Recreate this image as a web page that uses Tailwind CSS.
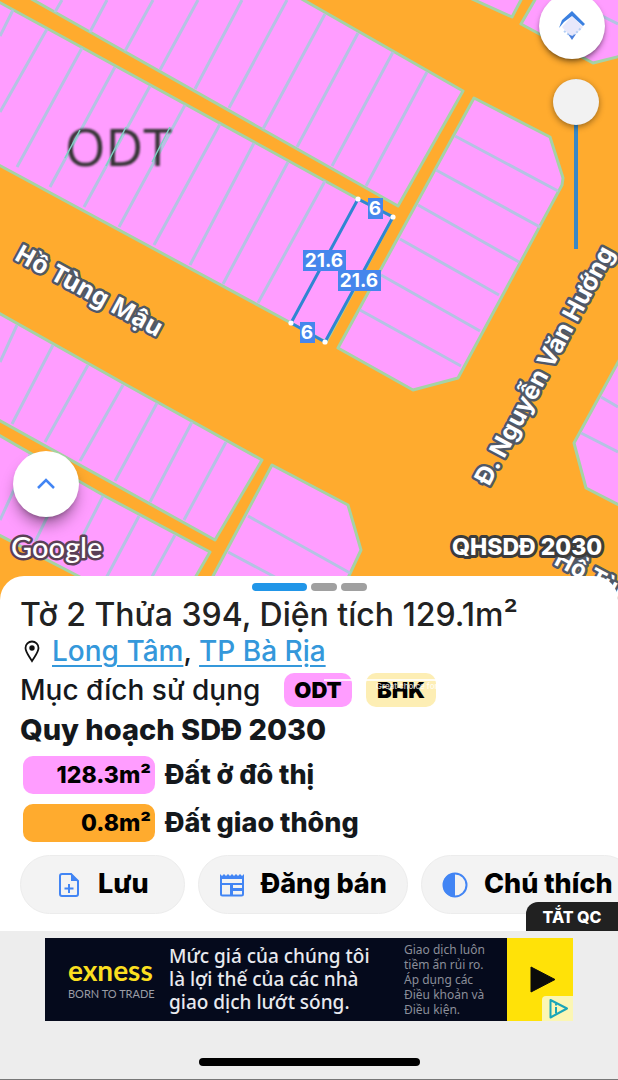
<!DOCTYPE html>
<html lang="vi">
<head>
  <meta charset="UTF-8">
  <meta name="viewport" content="width=device-width, initial-scale=1">
  <title>Tờ 2 Thửa 394</title>
  <script src="https://cdn.jsdelivr.net/npm/@tailwindcss/browser@4"></script>
</head>
<body class="flex flex-col min-h-screen overflow-x-hidden bg-[#ededed] text-[#14181c] font-['Inter','Noto_Sans',sans-serif]">

  <!-- Map -->
  <main class="relative flex-1 min-h-[480px] bg-[#ffab2e] overflow-hidden">
    <svg class="absolute inset-0 w-full h-full" viewBox="0 0 618 603" preserveAspectRatio="xMidYMin slice" role="img" aria-label="Bản đồ quy hoạch">
      <!-- blocks -->
      <g fill="#ff9dff" stroke="#a5d3a5" stroke-width="3" stroke-linejoin="round">
        <path d="M28 -3L90 32L398 206L463 91L300 -2Z"/>
        <path d="M-3 1L83 48L358 199L393 217L326 342L291 323L-3 164Z"/>
        <path d="M474 98L550 137L563 178L562 185L458 378L413 390L338 348Z"/>
        <path d="M470 -2L512 17L522 -2Z"/>
        <path d="M536 -2L521 24L593 63L621 56V-3Z"/>
        <path d="M-3 312L123 383L262 460L215 540L-3 419Z"/>
        <path d="M-3 434L103 495L210 552L188 590H105L-3 534Z"/>
        <path d="M272 465L348 505L361 550L340 595H203Z"/>
        <path d="M621 357L574 443L586 488L621 506Z"/>
      </g>
      <!-- plot lines -->
      <g fill="none" stroke="#b4c3e3" stroke-width="3">
        <path d="M62 0L55 12M107 0L90 32M153 0L125 51M198 0L160 70M242 0L195 89M287 0L229 108M325 14L263 129M358 33L297 147M393 52L332 166M427 72L366 186"/>
        <path d="M13 10L0 36M47 29L0 112M82 48L17 167M115 67L50 187M150 86L84 207M185 105L119 227M220 124L154 245M254 143L190 265M288 162L223 284M325 181L258 303"/>
        <path d="M455 136L558 191M436 170L540 227M418 205L519 262M400 239L499 295M381 275L480 331M360 310L461 366"/>
        <path d="M600 15L618 24M601 397L618 407M581 433L618 452"/>
        <path d="M17 325L0 362M53 345L12 424M88 365L45 442M123 385L80 461M157 403L115 481M192 422L150 502M226 442L184 520"/>
        <path d="M30 455L0 520M67 476L35 542M103 496L68 565M139 516L104 582M175 535L148 584M248 516L350 573M228 552L273 576L290 586"/>
      </g>
      <text x="65" y="166" font-size="52" font-weight="500" fill="#333" class="font-['Open_Sans'] blur-[1px]">ODT</text>
      <path d="M80 130L65 158M126 127L106 166M170 127L152 162" stroke="#7fd0c4" stroke-width="1.5"/>

      <!-- selected plot -->
      <path d="M358 199L393 217L325 342L291 323Z" fill="none" stroke="#2f86d2" stroke-width="3"/>
      <g fill="#fff"><circle cx="358" cy="199" r="2.6"/><circle cx="393" cy="217" r="2.6"/><circle cx="325" cy="342" r="2.6"/><circle cx="291" cy="323" r="2.6"/></g>
      <g fill="#4686ec"><path d="M368 198h15v21h-15zM303 250h43v21h-43zM338 270h43v21h-43zM300 322h15v21h-15z"/></g>
      <g fill="#fff" font-size="19" font-weight="700" text-anchor="middle">
        <text x="375" y="215">6</text>
        <text x="324" y="267">21.6</text>
        <text x="359" y="287">21.6</text>
        <text x="307" y="339">6</text>
      </g>

      <!-- road names -->
      <g fill="#fff" stroke="#505866" stroke-width="5" stroke-linejoin="round" paint-order="stroke" font-weight="700">
        <text transform="translate(13 259) rotate(28.5)" font-size="25" class="font-['Noto_Sans']">Hồ Tùng Mậu</text>
        <text transform="translate(489 487) rotate(-61.8)" font-size="25">Đ. Nguyễn Văn Hướng</text>
        <text transform="translate(553 564) rotate(28)" font-size="24">Hồ Tùng Mậu</text>
      </g>
      <text x="452" y="555" font-size="23" font-weight="800" fill="#fff" stroke="#3c3c3c" stroke-width="6" stroke-linejoin="round" paint-order="stroke">QHSDĐ 2030</text>
      <text x="11" y="558" font-size="29" font-weight="500" fill="#fff" stroke="#5a4056" stroke-width="5" stroke-linejoin="round" paint-order="stroke" class="font-['Lato']">Google</text>
    </svg>

    <button type="button" aria-label="Lớp bản đồ" class="absolute -top-[7px] right-[13px] size-[66px] rounded-full bg-white shadow-md shadow-black/40 grid place-items-center">
      <svg class="size-8" viewBox="0 0 32 32" fill="none">
        <path d="M16 6L27 17L16 28L6 17Z" fill="#e8e8fb"/>
        <path d="M3 18L6 10L16 1L29 14L27 16L16 6L8 12Z" fill="#3b80e0"/>
        <path d="M8 21L16 27L25 18" stroke="#b4cff5" stroke-width="2" stroke-dasharray="2 2"/>
        <path d="M12 24L16 26L20 24L16 30Z" fill="#4a7fdc"/>
      </svg>
    </button>
    <input type="range" min="0" max="100" value="0" aria-label="Độ trong suốt" class="absolute top-[79px] right-[19px] w-[46px] h-[170px] appearance-none [writing-mode:vertical-lr] bg-[linear-gradient(#3a88c4,#3a88c4)] bg-[length:4px_100%] bg-center bg-no-repeat [&::-webkit-slider-thumb]:appearance-none [&::-webkit-slider-thumb]:size-[46px] [&::-webkit-slider-thumb]:rounded-full [&::-webkit-slider-thumb]:bg-[#f2f2f2] [&::-webkit-slider-thumb]:shadow-[0_2px_6px_rgba(0,0,0,0.4)]">
    <button type="button" aria-label="Mở rộng" class="absolute top-[451px] left-[13px] size-[66px] rounded-full bg-white shadow-lg shadow-black/40 grid place-items-center">
      <svg class="size-6" viewBox="0 0 24 24" fill="none" stroke="#4285f4" stroke-width="2.500"><path d="M4 16L12 8L20 16"/></svg>
    </button>
  </main>

  <!-- Plot details -->
  <section class="relative -mt-6 rounded-t-3xl bg-white pt-[7px] pb-[17px]">
    <div class="flex justify-center gap-1">
      <span class="w-[55px] h-2 rounded-full bg-[#2196e8]"></span>
      <span class="w-[26px] h-2 rounded-full bg-[#a0a0a0]"></span>
      <span class="w-[26px] h-2 rounded-full bg-[#a0a0a0]"></span>
    </div>

    <div class="px-5">
      <h1 class="mt-1 text-[32px] leading-10 font-medium whitespace-nowrap text-[#222]">Tờ 2 Thửa 394, Diện tích 129.1m²</h1>
      <p class="flex items-center text-[28px] leading-8 font-medium whitespace-nowrap">
        <svg class="w-6 h-6 mr-2" viewBox="0 0 24 24" fill="none" stroke="#111" stroke-width="1.800"><path d="M12 22C9 17 5.500 13 5.500 9a6.500 6.500 0 0 1 13 0C18.500 13 15 17 12 22Z"/><circle cx="12" cy="9" r="1.800" fill="#111"/></svg>
        <span><a href="#" class="text-[#3498db] underline underline-offset-4 decoration-2">Long Tâm</a>, <a href="#" class="text-[#3498db] underline underline-offset-4 decoration-2">TP Bà Rịa</a></span>
      </p>
      <div class="relative flex items-center gap-3.5 h-[45px] text-[28px] font-medium whitespace-nowrap">
        <span class="w-[250px]">Mục đích sử dụng</span>
        <span class="w-[68px] h-[34px] rounded-[10px] bg-[#ff9dff] text-black text-center text-[22px] leading-[34px] font-black">ODT</span>
        <span class="w-[70px] h-[34px] rounded-[10px] bg-[#fdeeb4] text-black text-center text-[22px] leading-[34px] font-black">BHK</span>
        <span class="absolute left-[304px] top-3 w-28 pl-[52px] border-t-2 border-white/80 text-[8px] leading-[10px] text-white/80">Great choice for you</span>
      </div>
      <h2 class="text-[29px] leading-9 font-extrabold">Quy hoạch SDĐ 2030</h2>
      <ul class="mt-2 ml-[3px] space-y-2.5 text-[27px] leading-[38px] font-extrabold">
        <li class="flex items-center gap-2.5"><span class="w-[132px] h-[38px] pr-1 rounded-[10px] bg-[#ff9dff] text-black text-right text-[23px]">128.3m²</span>Đất ở đô thị</li>
        <li class="flex items-center gap-2.5"><span class="w-[132px] h-[38px] pr-1 rounded-[10px] bg-[#ffab2e] text-black text-right text-[23px]">0.8m²</span>Đất giao thông</li>
      </ul>
    </div>

    <div class="mt-[13px] pl-5 flex gap-[13px] overflow-hidden text-[27px] font-extrabold text-black whitespace-nowrap">
      <button type="button" class="flex shrink-0 items-center gap-4 h-[59px] px-[35px] rounded-full bg-[#f3f3f3] border border-[#ececec]">
        <svg class="size-[26px]" viewBox="0 0 26 26" fill="none" stroke="#4285f4" stroke-width="2"><path d="M15 2H6a2 2 0 0 0-2 2V22a2 2 0 0 0 2 2H20a2 2 0 0 0 2-2V9Z"/><path d="M15 1V9H22Z" fill="#4285f4" stroke="none"/><path d="M13 12V21M8.500 16.500H17.500"/></svg>
        Lưu
      </button>
      <button type="button" class="flex shrink-0 items-center gap-4 h-[59px] px-5 rounded-full bg-[#f3f3f3] border border-[#ececec]">
        <svg class="size-[26px]" viewBox="0 0 26 26" fill="none" stroke="#4285f4" stroke-width="2"><path d="M1 2L3 4L5 2L7 4L9 2L11 4L13 2L15 4L17 2L19 4L21 2L23 4L25 2V6H1Z" fill="#4285f4" stroke="none"/><path d="M2 4V22a1.500 1.500 0 0 0 1.500 1.500H22.500A1.500 1.500 0 0 0 24 22V4M2 12H24M2 6H24"/><path d="M12.500 12V23M12.500 17.500H24" stroke-width="3"/></svg>
        Đăng bán
      </button>
      <button type="button" class="flex shrink-0 items-center gap-4 h-[59px] px-5 rounded-full bg-[#f3f3f3] border border-[#ececec]">
        <svg class="size-[26px]" viewBox="0 0 26 26"><circle cx="13" cy="13" r="11.500" fill="none" stroke="#4285f4" stroke-width="2"/><path d="M13 1a12 12 0 0 0 0 24Z" fill="#4285f4"/></svg>
        Chú thích
      </button>
    </div>

    <button type="button" class="absolute right-0 bottom-0 h-[29px] w-[92px] rounded-tl-xl bg-[#212121] text-white text-base font-extrabold">TẮT QC</button>
  </section>

  <!-- Ad banner -->
  <footer class="flex flex-col items-center h-[149px] pt-[7px] border-b border-[#777] bg-[#ededed]">
    <div class="flex w-[528px] max-w-full h-[83px] bg-[#050a1c] text-white font-['Noto_Sans',sans-serif]">
      <div class="w-[124px] pl-[23px] pt-[18px] font-['Lato',sans-serif]">
        <p class="text-[28px] leading-7 font-bold text-[#fbdf20]">exness</p>
        <p class="mt-1 text-[11px] leading-3 text-[#9a9ca5] whitespace-nowrap">BORN TO TRADE</p>
      </div>
      <p class="w-[235px] pt-[7px] text-[19px] leading-[23px] font-medium text-[#e8e9ee] whitespace-nowrap">Mức giá của chúng tôi<br>là lợi thế của các nhà<br>giao dịch lướt sóng.</p>
      <p class="flex-1 pt-1 text-[12px] leading-[15px] text-[#8b8e99] whitespace-nowrap">Giao dịch luôn<br>tiềm ẩn rủi ro.<br>Áp dụng các<br>Điều khoản và<br>Điều kiện.</p>
      <a href="#" aria-label="Mở quảng cáo" class="relative w-[66px] bg-[#ffe208]">
        <svg class="w-full h-full" viewBox="0 0 66 83">
          <path d="M24 29V54L48 41.500Z" fill="#0b0b0b" stroke="#0b0b0b" stroke-linejoin="round"/>
          <path d="M35 83V62q0-4 4-4H66V83Z" fill="#fbf6b4"/>
          <path d="M43.500 62V79.500L60 70.500Z" fill="none" stroke="#1aa5b8" stroke-width="2" stroke-linejoin="round"/>
          <path d="M49 69V75.500M49 65.500V67.500" stroke="#1aa5b8" stroke-width="2"/>
        </svg>
      </a>
    </div>
    <div class="mt-[37px] w-[221px] h-2 rounded-full bg-black"></div>
  </footer>

</body>
</html>
